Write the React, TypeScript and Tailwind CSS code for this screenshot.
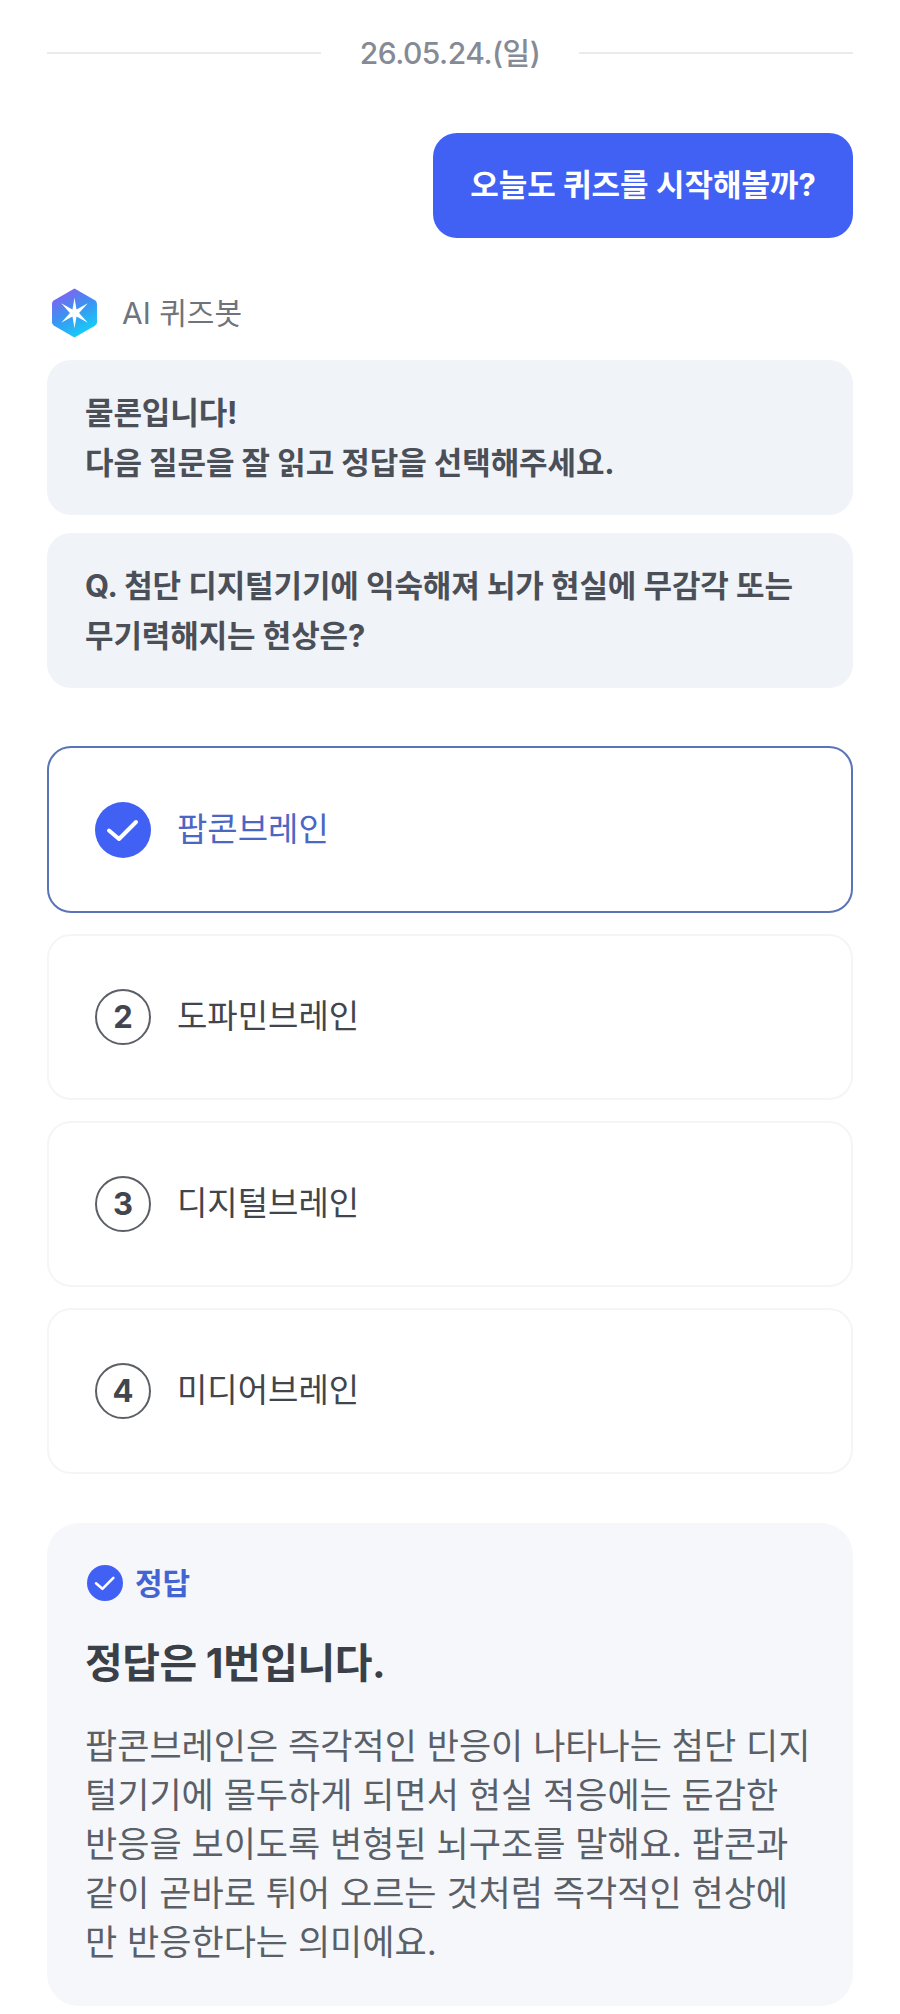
const font = { fontFamily: '"Inter", "Noto Sans CJK KR", sans-serif' };

function CheckCircle({ className }: { className: string }) {
  return (
    <svg viewBox="0 0 56 56" className={className}>
      <circle cx="28" cy="28" r="28" fill="#4161f5" />
      <path d="M14 28.5 L24 37 L41 20" fill="none" stroke="#fff" strokeWidth="4" strokeLinecap="round" strokeLinejoin="round" />
    </svg>
  );
}

function BotLogo() {
  return (
    <svg viewBox="0 0 46 50" className="w-[47px] h-[52px] shrink-0">
      <defs>
        <linearGradient id="hex" x1="0.2" y1="0" x2="0.7" y2="1">
          <stop offset="0" stopColor="#8b5cf0" />
          <stop offset="0.45" stopColor="#3f8ff2" />
          <stop offset="1" stopColor="#10d4f8" />
        </linearGradient>
      </defs>
      <path d="M23 1 L43 12.5 Q45 13.7 45 16 V34 Q45 36.3 43 37.5 L23 49 L3 37.5 Q1 36.3 1 34 V16 Q1 13.7 3 12.5 Z" fill="url(#hex)" />
      <path d="M23 10 L25 21.5 L36 15.5 L27.5 25 L36 34.5 L25 28.5 L23 40 L21 28.5 L10 34.5 L18.5 25 L10 15.5 L21 21.5 Z" fill="#fff" />
    </svg>
  );
}

const options = [
  { n: 2, label: "도파민브레인" },
  { n: 3, label: "디지털브레인" },
  { n: 4, label: "미디어브레인" },
];

export default function App() {
  return (
    <div style={font} className="w-[900px] h-[2014px] bg-white px-[47px] pt-[33px] overflow-hidden">
      {/* 날짜 */}
      <div className="flex items-center h-[40px]">
        <div className="flex-1 h-[2px] bg-[#e9ebee]" />
        <span className="w-[258px] text-center text-[30px] font-medium tracking-[-0.5px] text-[#858b96]">26.05.24.(일)</span>
        <div className="flex-1 h-[2px] bg-[#e9ebee]" />
      </div>

      {/* 내 말풍선 */}
      <div className="flex justify-end mt-[60px]">
        <div className="w-[420px] h-[105px] rounded-[24px] bg-[#4161f5] flex items-center justify-center text-[31px] font-bold text-white">
          오늘도 퀴즈를 시작해볼까?
        </div>
      </div>

      {/* 봇 이름 */}
      <div className="flex items-center mt-[50px] pl-[4px] gap-[24px] h-[50px]">
        <BotLogo />
        <span className="text-[30px] text-[#6f747c]">AI 퀴즈봇</span>
      </div>

      <div className="mt-[22px] rounded-[24px] bg-[#f0f3f7] h-[155px] px-[38px] flex flex-col justify-center text-[31px] leading-[50px] font-bold tracking-[-0.1px] text-[#4a4f58]">
        <p>물론입니다!</p>
        <p>다음 질문을 잘 읽고 정답을 선택해주세요.</p>
      </div>
      <div className="mt-[18px] rounded-[24px] bg-[#f0f3f7] h-[155px] px-[38px] flex flex-col justify-center text-[31px] leading-[50px] font-bold tracking-[-0.1px] text-[#4a4f58]">
        <p>Q. 첨단 디지털기기에 익숙해져 뇌가 현실에 무감각 또는</p>
        <p>무기력해지는 현상은?</p>
      </div>

      {/* 보기 */}
      <div className="mt-[58px] flex flex-col gap-[21px]">
        <div className="h-[167px] rounded-[24px] border-2 border-[#5a74b8] flex items-center pl-[46px] gap-[26px]">
          <CheckCircle className="w-[56px] h-[56px] shrink-0" />
          <span className="text-[33px] text-[#4c66c4]">팝콘브레인</span>
        </div>
        {options.map((o) => (
          <div key={o.n} className="h-[166px] rounded-[24px] border-2 border-[#f4f5f7] flex items-center pl-[46px] gap-[26px]">
            <div className="w-[56px] h-[56px] shrink-0 rounded-full border-2 border-[#5c6066] flex items-center justify-center text-[31px] font-bold text-[#41454e]">
              {o.n}
            </div>
            <span className="text-[33px] text-[#41454e]">{o.label}</span>
          </div>
        ))}
      </div>

      {/* 정답 */}
      <div className="mt-[49px] h-[483px] rounded-[32px] bg-[#f5f7fb] pl-[38px] pr-[30px] pt-[40px]">
        <div className="flex items-center gap-[12px] h-[40px] pl-[2px]">
          <CheckCircle className="w-[36px] h-[36px] shrink-0" />
          <span className="text-[30px] font-bold text-[#4464d4]">정답</span>
        </div>
        <h2 className="mt-[33px] text-[41px] leading-[54px] font-bold tracking-[-0.5px] text-[#3b3f48]">정답은 1번입니다.</h2>
        <div className="mt-[32px] text-[35px] leading-[49px] text-[#5a5f68] whitespace-nowrap">
          <p>팝콘브레인은 즉각적인 반응이 나타나는 첨단 디지</p>
          <p>털기기에 몰두하게 되면서 현실 적응에는 둔감한</p>
          <p>반응을 보이도록 변형된 뇌구조를 말해요. 팝콘과</p>
          <p>같이 곧바로 튀어 오르는 것처럼 즉각적인 현상에</p>
          <p>만 반응한다는 의미에요.</p>
        </div>
      </div>
    </div>
  );
}
